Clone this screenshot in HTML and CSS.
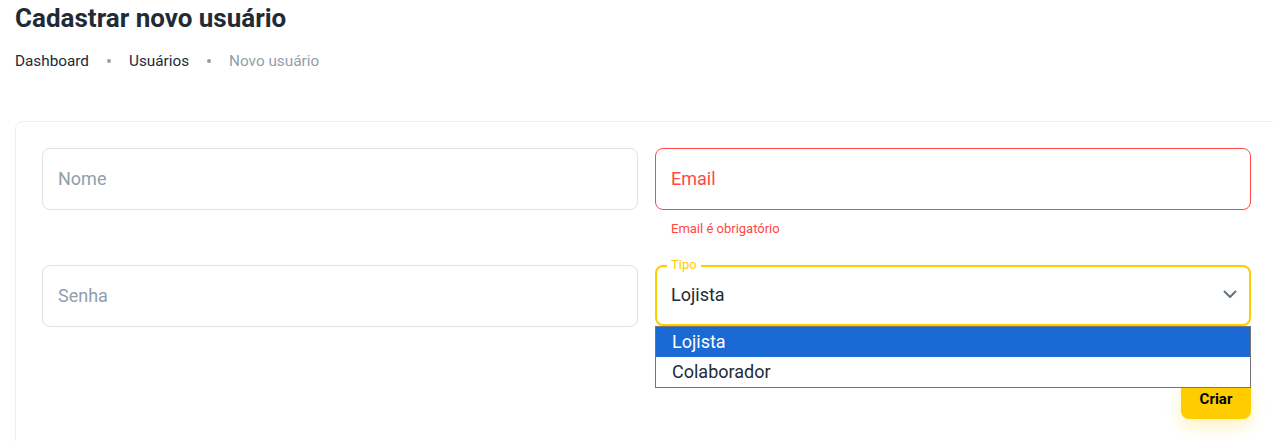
FILE: index.html
```html
<!DOCTYPE html>
<html lang="pt-BR">
<head>
<meta charset="utf-8">
<title>Cadastrar novo usuário</title>
<link rel="stylesheet" href="styles.css">
</head>
<body>
<div class="page">
  <h1 class="title">Cadastrar novo usuário</h1>
  <nav class="crumbs">
    <span class="crumb">Dashboard</span>
    <span class="sep"><span class="dot"></span></span>
    <span class="crumb">Usuários</span>
    <span class="sep"><span class="dot"></span></span>
    <span class="crumb muted">Novo usuário</span>
  </nav>
  <div class="card">
    <div class="grid">
      <div class="field">
        <div class="input"><span class="ph">Nome</span></div>
      </div>
      <div class="field">
        <div class="input error"><span class="ph err">Email</span></div>
        <div class="helper">Email é obrigatório</div>
      </div>
      <div class="field">
        <div class="input"><span class="ph">Senha</span></div>
      </div>
      <div class="field select-wrap">
        <div class="input select">
          <span class="label">Tipo</span>
          <span class="value">Lojista</span>
          <svg class="chev" width="14" height="9" viewBox="0 0 14 9"><path d="M1.5 1.5 L7 7 L12.5 1.5" fill="none" stroke="#637381" stroke-width="2" stroke-linecap="round" stroke-linejoin="round"/></svg>
        </div>
        <ul class="menu">
          <li class="opt active">Lojista</li>
          <li class="opt">Colaborador</li>
        </ul>
      </div>
    </div>
    <div class="actions">
      <button class="btn">Criar</button>
    </div>
  </div>
</div>
</body>
</html>
```
FILE: styles.css
```css
* { box-sizing: border-box; }
html, body { margin: 0; padding: 0; overflow: hidden; background: #fff; }
body { font-family: Roboto, "Liberation Sans", sans-serif; color: #212b36; }
.page { padding: 0 0 0 15px; width: 1290px; }
.title { margin: 0; font-size: 26px; line-height: 36px; font-weight: 700; color: #212b36; }
.crumbs { margin-top: 14px; display: flex; align-items: center; font-size: 15.3px; line-height: 22px; height: 22px; }
.crumb { color: #212b36; }
.crumb.muted { color: #919eab; }
.sep { width: 8px; margin: 0 16px; display: flex; justify-content: center; align-items: center; }
.dot { width: 4px; height: 4px; border-radius: 50%; background: #919eab; }
.card { margin-top: 49px; width: 1263px; border: 1px solid #edeff1; border-radius: 8px; padding: 26px 26px 40px 26px; min-height: 340px; }
.grid { display: grid; grid-template-columns: 596px 596px; column-gap: 17px; row-gap: 26px; }
.field { position: relative; }
.input { height: 62px; border: 1px solid #dfe3e8; border-radius: 8px; display: flex; align-items: center; padding: 0 15px 2px; font-size: 18px; }
.ph { color: #919eab; }
.input.error { border-color: #ff4842; }
.ph.err { color: #ff4842; }
.helper { margin: 9px 0 0 16px; font-size: 13px; line-height: 20px; color: #ff4842; }
.input.select { border: 2px solid #ffcc00; padding: 0 14px 2px; position: relative; justify-content: space-between; height: 61px; }
.value { color: #212b36; }
.label { position: absolute; left: 10px; top: -9px; background: #fff; padding: 0 4px; font-size: 13px; line-height: 14px; color: #ffcc00; }
.chev { margin-right: -2px; }
.menu { position: absolute; left: 0; right: 0; top: 61px; margin: 0; padding: 0; list-style: none; border: 1px solid #767676; background: #fff; z-index: 5; }
.opt { height: 30px; line-height: 30px; padding-left: 16px; font-size: 18px; color: #212b36; }
.opt.active { background: #1b69d4; color: #fff; }
.actions { display: flex; justify-content: flex-end; padding-right: 0; margin-top: 52px; width: 1209px; }
.btn { height: 40px; width: 70px; border: 0; border-radius: 8px; background: #ffcc00; color: #000; font-family: Roboto, "Liberation Sans", sans-serif; font-weight: 700; font-size: 15px; box-shadow: 0 8px 16px rgba(255, 204, 0, 0.24); }
```
